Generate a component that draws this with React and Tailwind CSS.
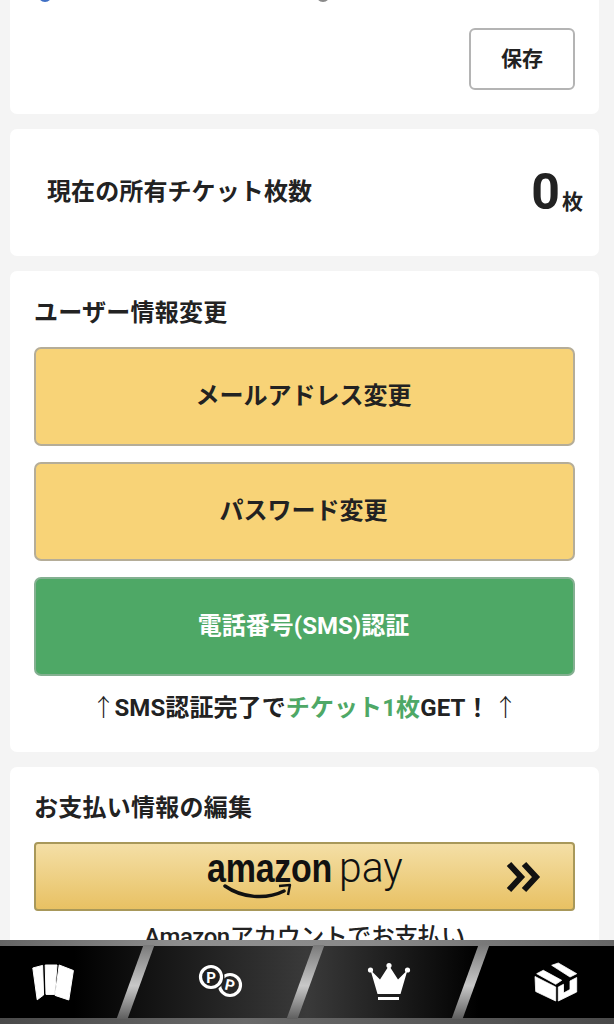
const sans = "font-['Roboto','Noto_Sans_CJK_JP',sans-serif]";

function ActionButton({ className, children }) {
  return (
    <button className={`flex h-[99px] w-full items-center justify-center rounded-[7px] border-2 pr-[2px] pb-[2px] text-[24px] font-bold ${className}`}>
      {children}
    </button>
  );
}

function CardsIcon() {
  return (
    <svg width="44" height="38" viewBox="0 0 44 38" fill="#fff" stroke="#fff" strokeWidth="1" strokeLinejoin="round">
      <polygon points="1.8,5 11.6,2.4 12.6,32 6.2,36.8" />
      <polygon points="14.2,2 26,2 23.6,31.4 15,31.4" />
      <polygon points="28.2,2 42.4,7.5 37.8,37 24,32.4" />
    </svg>
  );
}

function CoinsIcon() {
  return (
    <svg width="46" height="40" viewBox="0 0 46 40">
      <circle cx="32" cy="23" r="10.500" fill="none" stroke="#fff" strokeWidth="3.200" />
      <circle cx="13" cy="15" r="13.500" fill="#202020" />
      <circle cx="13" cy="15" r="10.500" fill="none" stroke="#fff" strokeWidth="3.200" />
      <text x="13" y="20.500" textAnchor="middle" fill="#fff" fontSize="15" fontWeight="700" fontFamily="Roboto, sans-serif">P</text>
      <text x="32" y="28.500" textAnchor="middle" fill="#fff" fontSize="15" fontWeight="700" fontFamily="Roboto, sans-serif" transform="rotate(12 32 23)">P</text>
    </svg>
  );
}

function CrownIcon() {
  return (
    <svg width="46" height="40" viewBox="0 0 46 40" fill="#fff">
      <circle cx="4.500" cy="8" r="2.600" />
      <circle cx="23" cy="3.500" r="2.600" />
      <circle cx="41.500" cy="8" r="2.600" />
      <polygon points="4.500,8 14,17.500 23,3.500 32,17.500 41.500,8 34.500,32 11.500,32" />
      <rect x="12" y="35" width="21" height="3" />
    </svg>
  );
}

function BoxIcon() {
  return (
    <svg width="46" height="40" viewBox="0 0 46 40" fill="#fff" stroke="#fff" strokeWidth="0.800" strokeLinejoin="round">
      <polygon points="2,14.500 22.700,25 22.700,39 2.700,29.500" />
      <polygon points="25.300,25 30.500,22.300 30.500,31 37,27.500 37,19 43.700,15.500 43.700,30 25.300,39" />
      <polygon points="3.700,11.700 10.300,8.300 28.700,18.300 22.700,22.300" />
      <polygon points="18.700,3.300 25.300,1 43.700,11.700 37,15" />
    </svg>
  );
}

function Strip() {
  return (
    <span className="absolute -top-px -bottom-px right-[-5px] w-[11px] skew-x-[-20deg] bg-[linear-gradient(180deg,#7a7a7a_0%,#c8c8c8_55%,#5e5e5e_100%)]" />
  );
}

export default function App() {
  return (
    <div className={`h-screen overflow-hidden bg-[#f4f4f4] text-[#222] ${sans}`}>
      <div className="ml-[10px] flex w-[589px] flex-col gap-[15px]">
        <section className="h-[114px] rounded-b-[7px] bg-white">
          <div className="flex h-[3px] overflow-hidden">
            <span className="mt-[-12px] ml-[28px] size-[14px] rounded-full bg-[#3f6fc4]" />
            <span className="mt-[-12px] ml-[264px] size-[14px] rounded-full bg-[#8a8a8a]" />
          </div>
          <div className="mt-[25px] flex justify-end pr-[24px]">
            <button className="h-[62px] w-[106px] rounded-[6px] border-2 border-[#b4b4b4] bg-white pt-[1px] text-[21px] font-bold">保存</button>
          </div>
        </section>

        <section className="flex h-[127px] items-center justify-between rounded-[7px] bg-white pr-[16px] pb-[2px] pl-[37px]">
          <h2 className="text-[24px] font-bold leading-[34px] tracking-[0.1px]">現在の所有チケット枚数</h2>
          <p className="flex items-baseline gap-[2px] font-bold">
            <span className="text-[50px] leading-none">0</span>
            <span className="text-[21px] leading-none">枚</span>
          </p>
        </section>

        <section className="rounded-[7px] bg-white px-[24px] pt-[25px] pb-[26px]">
          <h2 className="mb-[17px] text-[24px] font-bold leading-[34px] tracking-[0.25px]">ユーザー情報変更</h2>
          <div className="flex flex-col gap-[16px]">
            <ActionButton className="border-[#b5ad98] bg-[#f8d377] text-[#222]">メールアドレス変更</ActionButton>
            <ActionButton className="border-[#b5ad98] bg-[#f8d377] text-[#222]">パスワード変更</ActionButton>
            <ActionButton className="border-[#84b091] bg-[#4ea866] text-white">電話番号(SMS)認証</ActionButton>
          </div>
          <p className="mt-[14px] flex items-center justify-center text-[24px] font-bold leading-[36px] whitespace-pre">
            <span className="mr-[-1px] font-light text-[#222]">↑</span>
            <span className="tracking-[0.1px]">SMS認証完了で<span className="text-[#4ea866]">チケット1枚</span>GET！</span>
            <span className="ml-[4px] font-light text-[#222]">↑</span>
          </p>
        </section>

        <section className="h-[300px] rounded-t-[7px] bg-white px-[24px] pt-[24px]">
          <h2 className="mb-[17px] text-[24px] font-bold leading-[34px] tracking-[0.25px]">お支払い情報の編集</h2>
          <button className="relative block h-[69px] w-full rounded-[4px] border-2 border-[#a8985a] bg-[linear-gradient(180deg,#f4dfa6_0%,#e8c163_100%)]">
            <span className="absolute top-[1px] left-[171px] w-[180px] text-left text-[40px] leading-[46px] font-bold text-[#111] font-['Liberation_Sans',sans-serif] origin-left scale-x-[0.85] tracking-[-0.3px]">amazon</span>
            <span className="absolute top-[0px] left-[303px] text-[43px] leading-[46px] font-light text-[#111] font-['Roboto',sans-serif] origin-left scale-x-[0.95]">pay</span>
            <svg className="absolute top-[39px] left-[186px]" width="72" height="20" viewBox="0 0 72 20" fill="none">
              <path d="M3 3 C20 15 44 17 62 8" stroke="#111" strokeWidth="3.500" strokeLinecap="round" />
              <path d="M57 3 L68 2 L66 12" stroke="#111" strokeWidth="2.400" strokeLinejoin="round" />
            </svg>
            <svg className="absolute top-[17px] left-[470px]" width="36" height="32" viewBox="0 0 36 32" fill="none" stroke="#111" strokeWidth="6">
              <path d="M3 3 L15 16 L3 29" />
              <path d="M18 3 L30 16 L18 29" />
            </svg>
          </button>
          <p className="mt-[8px] text-center text-[24px] font-medium leading-[36px] tracking-[-0.5px]">Amazonアカウントでお支払い</p>
        </section>
      </div>

      <nav className="fixed right-0 bottom-0 left-0 flex h-[84px] flex-col">
        <div className="h-[6px] bg-[linear-gradient(90deg,#666_0%,#8f8f8f_30%,#8a8a8a_60%,#666_100%)]" />
        <div className="flex h-[72px] bg-[linear-gradient(90deg,#000_12%,#3a3a3a_50%,#000_78%)]">
          <a className="relative flex w-[136px] items-center pl-[31px]"><CardsIcon /><Strip /></a>
          <a className="relative flex w-[170px] items-center pl-[62px]"><CoinsIcon /><Strip /></a>
          <a className="relative flex w-[165px] items-center pl-[60px]"><CrownIcon /><Strip /></a>
          <a className="flex flex-1 items-center pl-[62px]"><BoxIcon /></a>
        </div>
        <div className="h-[6px] bg-[linear-gradient(90deg,#4a4a4a_0%,#6a6a6a_40%,#4a4a4a_100%)]" />
      </nav>
    </div>
  );
}
